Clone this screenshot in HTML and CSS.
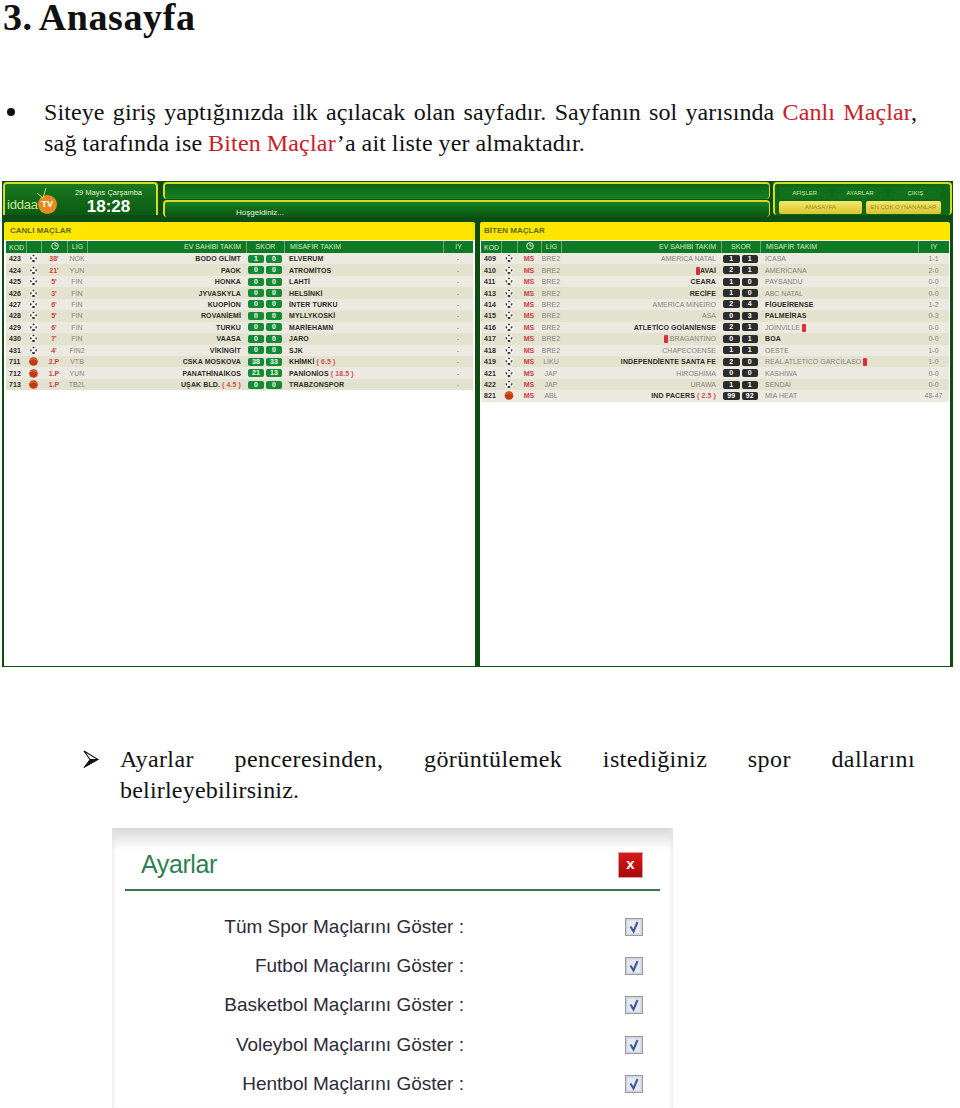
FILE: index.html
```html
<!DOCTYPE html>
<html lang="tr">
<head>
  <meta charset="UTF-8">
  <title>Anasayfa</title>
  <link rel="stylesheet" href="styles.css">
</head>
<body>
  <svg class="defs" width="0" height="0">
    <symbol id="ball" viewBox="0 0 10 10">
      <circle cx="5" cy="5" r="4.6" fill="#f4f4f0"/>
      <path d="M5 .6l1.400 1.100-1.400 1-1.400-1zM1 4l1.600-.3.5 1.600-1.300 1zM9 4l-1.600-.3-.5 1.600 1.300 1zM3 8l1-1.400h2l1 1.400-2 1.200z" fill="#333"/>
    </symbol>
    <symbol id="basket" viewBox="0 0 10 10">
      <circle cx="5" cy="5" r="4.800" fill="#c23a14"/>
      <path d="M1.400 3.400a5 4 0 0 1 7.200 0" fill="none" stroke="#e8804a" stroke-width=".9"/>
    </symbol>
    <symbol id="tick" viewBox="0 0 18 18">
      <rect x=".5" y=".5" width="17" height="17" fill="#d4d8e8" stroke="#9a9a9a"/>
      <rect x="2" y="2" width="14" height="14" fill="#e6e8f2" stroke="#c4c8d8" stroke-width=".6"/>
      <path d="M5.500 8.500l3 5 4-9.500" fill="none" stroke="#3f5694" stroke-width="2"/>
    </symbol>
  </svg>

  <h1 class="page-title">3. Anasayfa</h1>

  <div class="item first-item">
    <span class="dot"></span>
    <p class="item-text">
      <span class="just">Siteye giriş yaptığınızda ilk açılacak olan sayfadır. Sayfanın sol yarısında <em>Canlı Maçlar</em>,</span>
      <span class="tight">sağ tarafında ise <em>Biten Maçlar</em>’a ait liste yer almaktadır.</span>
    </p>
  </div>

  <div class="app">
    <div class="top">
      <div class="logo-box">
        <div class="logo">
          <span class="logo-word">iddaa</span>
          <span class="logo-tv">TV</span>
          <svg class="antenna" width="14" height="10" viewBox="0 0 14 10"><path d="M7 10L10 0M7 10L1 5" fill="none" stroke="#c8d860" stroke-width="1"/></svg>
        </div>
        <div class="clock">
          <div class="clock-date">29 Mayıs Çarşamba</div>
          <div class="clock-time">18:28</div>
        </div>
      </div>
      <div class="bars">
        <div class="bar"></div>
        <div class="bar bar-welcome"><span>Hoşgeldiniz...</span></div>
      </div>
      <div class="menu">
        <div class="menu-row">
          <span class="menu-dark">AFİŞLER</span>
          <span class="menu-dark">AYARLAR</span>
          <span class="menu-dark">ÇIKIŞ</span>
        </div>
        <div class="menu-row">
          <span class="menu-gold menu-wide">ANASAYFA</span>
          <span class="menu-gold">EN ÇOK OYNANANLAR</span>
        </div>
      </div>
    </div>

    <div class="panels">
      <section class="panel panel-live">
        <h2 class="panel-title">CANLI MAÇLAR</h2>
        <div class="row head">
          <span>KOD</span><span></span>
          <span class="c"><svg class="clock-icon" width="8" height="8" viewBox="0 0 8 8"><circle cx="4" cy="4" r="3.300" fill="none" stroke="#fff" stroke-width=".9"/><path d="M4 2v2h2" fill="none" stroke="#fff" stroke-width=".8"/></svg></span>
          <span class="c">LİG</span><span class="r">EV SAHİBİ TAKIM</span><span class="c">SKOR</span><span>MİSAFİR TAKIM</span><span class="c">İY</span>
        </div>
        <div class="row"><b>423</b><svg class="ico"><use href="#ball"/></svg><i>38'</i><span class="c">NOK</span><b class="r">BODO GLİMT</b><span class="score"><u>1</u><u>0</u></span><b>ELVERUM</b><span class="c">-</span></div>
        <div class="row"><b>424</b><svg class="ico"><use href="#ball"/></svg><i>21'</i><span class="c">YUN</span><b class="r">PAOK</b><span class="score"><u>0</u><u>0</u></span><b>ATROMİTOS</b><span class="c">-</span></div>
        <div class="row"><b>425</b><svg class="ico"><use href="#ball"/></svg><i>5'</i><span class="c">FİN</span><b class="r">HONKA</b><span class="score"><u>0</u><u>0</u></span><b>LAHTİ</b><span class="c">-</span></div>
        <div class="row"><b>426</b><svg class="ico"><use href="#ball"/></svg><i>3'</i><span class="c">FİN</span><b class="r">JYVASKYLA</b><span class="score"><u>0</u><u>0</u></span><b>HELSİNKİ</b><span class="c">-</span></div>
        <div class="row"><b>427</b><svg class="ico"><use href="#ball"/></svg><i>6'</i><span class="c">FİN</span><b class="r">KUOPİON</b><span class="score"><u>0</u><u>0</u></span><b>İNTER TURKU</b><span class="c">-</span></div>
        <div class="row"><b>428</b><svg class="ico"><use href="#ball"/></svg><i>5'</i><span class="c">FİN</span><b class="r">ROVANİEMİ</b><span class="score"><u>0</u><u>0</u></span><b>MYLLYKOSKİ</b><span class="c">-</span></div>
        <div class="row"><b>429</b><svg class="ico"><use href="#ball"/></svg><i>6'</i><span class="c">FİN</span><b class="r">TURKU</b><span class="score"><u>0</u><u>0</u></span><b>MARİEHAMN</b><span class="c">-</span></div>
        <div class="row"><b>430</b><svg class="ico"><use href="#ball"/></svg><i>7'</i><span class="c">FİN</span><b class="r">VAASA</b><span class="score"><u>0</u><u>0</u></span><b>JARO</b><span class="c">-</span></div>
        <div class="row"><b>431</b><svg class="ico"><use href="#ball"/></svg><i>4'</i><span class="c">FİN2</span><b class="r">VİKİNGİT</b><span class="score"><u>0</u><u>0</u></span><b>SJK</b><span class="c">-</span></div>
        <div class="row"><b>711</b><svg class="ico"><use href="#basket"/></svg><i>2.P</i><span class="c">VTB</span><b class="r">CSKA MOSKOVA</b><span class="score"><u>38</u><u>33</u></span><b>KHİMKİ <em>( 6.5 )</em></b><span class="c">-</span></div>
        <div class="row"><b>712</b><svg class="ico"><use href="#basket"/></svg><i>1.P</i><span class="c">YUN</span><b class="r">PANATHİNAİKOS</b><span class="score"><u>21</u><u>13</u></span><b>PANİONİOS <em>( 18.5 )</em></b><span class="c">-</span></div>
        <div class="row"><b>713</b><svg class="ico"><use href="#basket"/></svg><i>1.P</i><span class="c">TB2L</span><b class="r">UŞAK BLD. <em>( 4.5 )</em></b><span class="score"><u>0</u><u>0</u></span><b>TRABZONSPOR</b><span class="c">-</span></div>
      </section>

      <section class="panel panel-done">
        <h2 class="panel-title">BİTEN MAÇLAR</h2>
        <div class="row head">
          <span>KOD</span><span></span>
          <span class="c"><svg class="clock-icon" width="8" height="8" viewBox="0 0 8 8"><circle cx="4" cy="4" r="3.300" fill="none" stroke="#fff" stroke-width=".9"/><path d="M4 2v2h2" fill="none" stroke="#fff" stroke-width=".8"/></svg></span>
          <span class="c">LİG</span><span class="r">EV SAHİBİ TAKIM</span><span class="c">SKOR</span><span>MİSAFİR TAKIM</span><span class="c">İY</span>
        </div>
        <div class="row"><b>409</b><svg class="ico"><use href="#ball"/></svg><i>MS</i><span class="c">BRE2</span><span class="r">AMERİCA NATAL</span><span class="score"><u>1</u><u>1</u></span><span>ICASA</span><span class="c">1-1</span></div>
        <div class="row"><b>410</b><svg class="ico"><use href="#ball"/></svg><i>MS</i><span class="c">BRE2</span><span class="r"><s>1</s><b>AVAİ</b></span><span class="score"><u>2</u><u>1</u></span><span>AMERİCANA</span><span class="c">2-0</span></div>
        <div class="row"><b>411</b><svg class="ico"><use href="#ball"/></svg><i>MS</i><span class="c">BRE2</span><b class="r">CEARA</b><span class="score"><u>1</u><u>0</u></span><span>PAYSANDU</span><span class="c">0-0</span></div>
        <div class="row"><b>413</b><svg class="ico"><use href="#ball"/></svg><i>MS</i><span class="c">BRE2</span><b class="r">RECİFE</b><span class="score"><u>1</u><u>0</u></span><span>ABC NATAL</span><span class="c">0-0</span></div>
        <div class="row"><b>414</b><svg class="ico"><use href="#ball"/></svg><i>MS</i><span class="c">BRE2</span><span class="r">AMERİCA MİNEİRO</span><span class="score"><u>2</u><u>4</u></span><b>FİGUEİRENSE</b><span class="c">1-2</span></div>
        <div class="row"><b>415</b><svg class="ico"><use href="#ball"/></svg><i>MS</i><span class="c">BRE2</span><span class="r">ASA</span><span class="score"><u>0</u><u>3</u></span><b>PALMEİRAS</b><span class="c">0-3</span></div>
        <div class="row"><b>416</b><svg class="ico"><use href="#ball"/></svg><i>MS</i><span class="c">BRE2</span><b class="r">ATLETİCO GOİANİENSE</b><span class="score"><u>2</u><u>1</u></span><span>JOİNVİLLE <s>1</s></span><span class="c">0-0</span></div>
        <div class="row"><b>417</b><svg class="ico"><use href="#ball"/></svg><i>MS</i><span class="c">BRE2</span><span class="r"><s>1</s> BRAGANTİNO</span><span class="score"><u>0</u><u>1</u></span><b>BOA</b><span class="c">0-0</span></div>
        <div class="row"><b>418</b><svg class="ico"><use href="#ball"/></svg><i>MS</i><span class="c">BRE2</span><span class="r">CHAPECOENSE</span><span class="score"><u>1</u><u>1</u></span><span>OESTE</span><span class="c">1-0</span></div>
        <div class="row"><b>419</b><svg class="ico"><use href="#ball"/></svg><i>MS</i><span class="c">LİKU</span><b class="r">INDEPENDİENTE SANTA FE</b><span class="score"><u>2</u><u>0</u></span><span>REAL ATLETİCO GARCİLASO <s>1</s></span><span class="c">1-0</span></div>
        <div class="row"><b>421</b><svg class="ico"><use href="#ball"/></svg><i>MS</i><span class="c">JAP</span><span class="r">HİROSHİMA</span><span class="score"><u>0</u><u>0</u></span><span>KASHİWA</span><span class="c">0-0</span></div>
        <div class="row"><b>422</b><svg class="ico"><use href="#ball"/></svg><i>MS</i><span class="c">JAP</span><span class="r">URAWA</span><span class="score"><u>1</u><u>1</u></span><span>SENDAİ</span><span class="c">0-0</span></div>
        <div class="row"><b>821</b><svg class="ico"><use href="#basket"/></svg><i>MS</i><span class="c">ABL</span><b class="r">IND PACERS <em>( 2.5 )</em></b><span class="score"><u>99</u><u>92</u></span><span>MİA HEAT</span><span class="c">48-47</span></div>
      </section>
    </div>
  </div>

  <div class="item second-item">
    <svg class="arrow" width="16" height="18" viewBox="0 0 16 18">
      <path d="M1 1L15 9.500 7 9.500z" fill="#fff" stroke="#111" stroke-width="1.200"/>
      <path d="M15 9.500L1 17.500 7 9.500z" fill="#111" stroke="#111" stroke-width="1"/>
    </svg>
    <p class="item-text">
      <span class="just">Ayarlar penceresinden, görüntülemek istediğiniz spor dallarını</span>
      <span>belirleyebilirsiniz.</span>
    </p>
  </div>

  <div class="settings">
    <div class="settings-head">
      <span class="settings-title">Ayarlar</span>
      <span class="close">x</span>
    </div>
    <div class="set-row"><span>Tüm Spor Maçlarını Göster :</span><svg class="check"><use href="#tick"/></svg></div>
    <div class="set-row"><span>Futbol Maçlarını Göster :</span><svg class="check"><use href="#tick"/></svg></div>
    <div class="set-row"><span>Basketbol Maçlarını Göster :</span><svg class="check"><use href="#tick"/></svg></div>
    <div class="set-row"><span>Voleybol Maçlarını Göster :</span><svg class="check"><use href="#tick"/></svg></div>
    <div class="set-row"><span>Hentbol Maçlarını Göster :</span><svg class="check"><use href="#tick"/></svg></div>
  </div>
</body>
</html>
```

FILE: styles.css
```css
html, body {
  margin: 0;
  height: 1108px;
  overflow: hidden;
  background: #fff;
}
body {
  font-family: "Liberation Serif", serif;
  color: #111;
}
.defs {
  display: block;
  height: 0;
}
.page-title {
  margin: 0 0 0 3px;
  height: 97px;
  font-size: 38px;
  line-height: 34px;
  font-weight: bold;
  letter-spacing: .6px;
  word-spacing: -2px;
}

/* text blocks */
.item {
  display: flex;
  font-size: 24px;
  line-height: 31px;
  letter-spacing: .2px;
}
.first-item {
  padding: 0 43px 0 44px;
  position: relative;
}
.second-item {
  margin-top: 77px;
  padding: 0 45px 0 120px;
  position: relative;
}
.item-text {
  margin: 0;
  flex: 1;
}
.item-text span {
  display: block;
}
.item-text .just {
  letter-spacing: .4px;
  text-align: justify;
  text-align-last: justify;
}
.first-item .item-text .just {
  letter-spacing: .1px;
}
.item-text .tight {
  word-spacing: -.5px;
}
.item-text em {
  font-style: normal;
  color: #c8202a;
}
.dot {
  position: absolute;
  left: 7px;
  top: 11px;
  width: 8px;
  height: 8px;
  border-radius: 50%;
  background: #111;
}
.arrow {
  position: absolute;
  left: 83px;
  top: 6px;
}

/* app screenshot */
.app {
  margin: 22px 7px 0 2px;
  height: 486px;
  box-sizing: border-box;
  background: #0b4d12;
  padding: 1px 1px 1px;
  font-family: "Liberation Sans", sans-serif;
  display: flex;
  flex-direction: column;
}
.top {
  display: flex;
  height: 38px;
  gap: 3px;
}
.logo-box {
  width: 155px;
  height: 33px;
  box-sizing: border-box;
  border: 2px solid #d4dc28;
  border-bottom: 0;
  border-radius: 4px 4px 0 0;
  background: linear-gradient(#17791e, #0c5a14);
  display: flex;
  color: #e8f0d8;
}
.logo {
  width: 56px;
  position: relative;
  display: flex;
  align-items: center;
  padding: 9px 0 0 2px;
  box-sizing: border-box;
}
.logo-word {
  font-size: 13px;
  letter-spacing: -.2px;
  color: #c6e890;
}
.logo-tv {
  width: 19px;
  height: 19px;
  flex: none;
  border-radius: 50%;
  background: #e58a22;
  color: #fff;
  font-size: 9px;
  font-weight: bold;
  text-align: center;
  line-height: 19px;
}
.antenna {
  position: absolute;
  left: 31px;
  top: 4px;
}
.clock {
  flex: 1;
  text-align: center;
  padding: 4px 0 0 0;
}
.clock-date {
  font-size: 7.500px;
  line-height: 9px;
}
.clock-time {
  font-size: 17px;
  line-height: 19px;
  font-weight: bold;
  color: #fff;
}
.bars {
  flex: 1;
  display: flex;
  flex-direction: column;
  gap: 1px;
  height: 35px;
  margin-left: 2px;
}
.bar {
  height: 17px;
  border: 2px solid #d4dc28;
  border-right-width: 1px;
  border-bottom: 0;
  border-radius: 4px;
  box-sizing: border-box;
  background: linear-gradient(#0e6616, #17801f);
}
.bar-welcome {
  flex: 1;
  font-size: 8px;
  color: #e6eee0;
  padding: 6px 0 0 71px;
  background: linear-gradient(#17801f, #0a5512);
}
.menu {
  width: 179px;
  height: 33px;
  padding: 3px 9px 0 4px;
  box-sizing: border-box;
  border: 2px solid #d4dc28;
  border-bottom: 0;
  border-radius: 4px;
  background: #0f6a18;
  display: flex;
  flex-direction: column;
  gap: 2px;
}
.menu-row {
  display: flex;
  gap: 4px;
  height: 12px;
}
.menu-dark {
  flex: 1;
  font-size: 6px;
  line-height: 12px;
  text-align: center;
  color: #d8e8a0;
  background: #11701b;
  border-radius: 2px;
}
.menu-gold {
  flex: 1;
  font-size: 6px;
  line-height: 13px;
  height: 13px;
  text-align: center;
  color: #8a8a2a;
  background: linear-gradient(#f6e86a, #d8c430);
  border-radius: 2px;
  white-space: nowrap;
}
.menu-wide {
  flex: 1.1;
}
.panels {
  flex: 1;
  display: flex;
  gap: 5px;
  padding-right: 2px;
  margin-top: 2px;
}
.panel {
  background: #fff;
  border-radius: 3px 3px 0 0;
}
.panel-live {
  width: 472px;
  margin-left: 1px;
  padding: 0 2px;
  --cols: 20px 15px 26px 20px 159px 38px 159px 30px;
}
.panel-done {
  flex: 1;
  padding: 0 1px;
  --cols: 20px 16px 24px 20px 160px 39px 158px 31px;
}
.panel-title {
  margin: 0 -2px 1px;
  height: 18px;
  padding-left: 6px;
  background: #ffe600;
  color: #5c6a10;
  font-size: 8px;
  line-height: 18px;
  border-radius: 3px 3px 0 0;
}
.panel-done .panel-title {
  margin: 0 -1px 1px;
  padding-left: 4px;
}

/* table rows */
.row {
  display: grid;
  grid-template-columns: var(--cols);
  height: 11.450px;
  align-items: center;
  font-size: 7px;
  line-height: 11px;
  color: #85857f;
  background: #e3e2cf;
  white-space: nowrap;
}
.row:nth-child(odd) {
  background: #ece9e0;
}
.row.head {
  height: 12px;
  background: #0f7a24;
  color: #d8ecd0;
}
.row > * {
  padding: 0 5px;
  box-sizing: border-box;
}
.row > :first-child {
  padding: 0 3px;
}
.row > .c {
  padding: 0;
}
.row.head > * + * {
  border-left: 1px solid #6aa878;
  height: 100%;
}
.row b {
  color: #2c2c28;
  font-weight: bold;
  letter-spacing: .1px;
}
.row i {
  font-style: normal;
  font-weight: bold;
  color: #c8404a;
  text-align: center;
  padding: 0;
}
.row em {
  font-style: normal;
  color: #d05050;
}
.row .c {
  text-align: center;
}
.row .r {
  text-align: right;
}
.clock-icon {
  display: inline-block;
  vertical-align: -1px;
}
.row > .ico {
  width: 100%;
  height: 9px;
  padding: 0;
}
.row > .score {
  display: flex;
  gap: 2px;
  padding: 0 2px;
}
.score u {
  flex: 1;
  height: 8px;
  border-radius: 2px;
  background: #138a34;
  color: #fff;
  font-weight: bold;
  text-align: center;
  text-decoration: none;
  line-height: 8px;
}
.panel-done .score u {
  background: #2c2c2c;
}
.row s {
  display: inline-block;
  width: 4px;
  height: 8px;
  border-radius: 1px;
  background: #d8303a;
  color: #d8303a;
  font-size: 5px;
  line-height: 8px;
  text-decoration: none;
  overflow: hidden;
  vertical-align: middle;
}

/* settings dialog */
.settings {
  width: 561px;
  margin: 22px 0 0 112px;
  height: 280px;
  box-sizing: border-box;
  padding: 0 30px 0 13px;
  font-family: "Liberation Sans", sans-serif;
  background: linear-gradient(#d8d8d8, #fff 22px);
  box-shadow: inset 4px 0 4px -3px #e4e4e4, inset -4px 0 4px -3px #e4e4e4;
}
.settings-head {
  display: flex;
  justify-content: space-between;
  align-items: center;
  height: 63px;
  margin: 0 -17px 16px 0;
  padding: 0 17px 0 16px;
  box-sizing: border-box;
  border-bottom: 2px solid #2f7a4c;
}
.settings-title {
  font-size: 25px;
  color: #2f7f52;
  padding-top: 12px;
  letter-spacing: -.4px;
}
.close {
  width: 25px;
  height: 26px;
  margin-top: 12px;
  background: linear-gradient(#d81a1a, #a80808);
  border: 1px solid #d8a0a0;
  box-sizing: border-box;
  color: #fff;
  font-size: 15px;
  font-weight: bold;
  line-height: 22px;
  text-align: center;
}
.set-row {
  display: grid;
  grid-template-columns: 339px 1fr;
  align-items: center;
  height: 39.400px;
  font-size: 19px;
  color: #2e2a3a;
  text-align: right;
}
.check {
  width: 18px;
  height: 18px;
  margin-left: 161px;
}
```
